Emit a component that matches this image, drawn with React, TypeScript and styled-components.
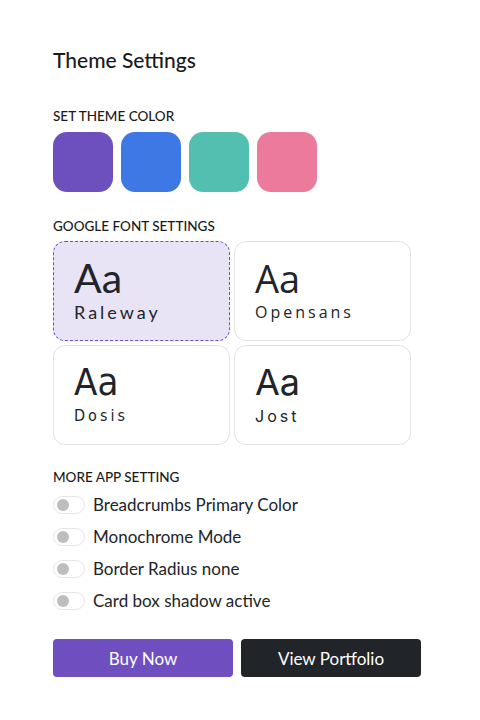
import React from "react";
import styled, { createGlobalStyle } from "styled-components";

const Global = createGlobalStyle`
  html, body { margin: 0; padding: 0; background: #fff; }
  body { font-family: "Lato", "Noto Sans", sans-serif; color: #212529; }
`;

const Panel = styled.div`
  width: 480px;
  box-sizing: border-box;
  padding: 48px 53px 40px 53px;
`;

const Title = styled.h2`
  margin: 0 0 36px 0;
  font-size: 21px;
  font-weight: 500;
  line-height: 24px;
  color: #1a1a1a;
`;

const SectionLabel = styled.h6<{ $gap?: number }>`
  margin: 0 0 ${(p) => p.$gap ?? 8}px 0;
  font-size: 13.5px;
  font-weight: 500;
  line-height: 16px;
  text-transform: uppercase;
  color: #1a1a1a;
`;

const Swatches = styled.div`
  display: flex;
  gap: 8px;
  margin-bottom: 26px;
`;

const Swatch = styled.div<{ $color: string }>`
  width: 60px;
  height: 60px;
  border-radius: 14px;
  background: ${(p) => p.$color};
`;

const FontGrid = styled.div`
  display: grid;
  grid-template-columns: 177px 177px;
  grid-auto-rows: 100px;
  gap: 4px;
  margin-bottom: 24px;
`;

const FontCard = styled.div<{ $active?: boolean }>`
  box-sizing: border-box;
  border-radius: 12px;
  border: 1px ${(p) => (p.$active ? "dashed #6f4fbf" : "solid #e3e3e3")};
  background: ${(p) => (p.$active ? "#e8e3f5" : "#fff")};
  padding: 14px 20px 0 20px;
  display: flex;
  flex-direction: column;
`;

const Sample = styled.div<{ $font: string; $size: number }>`
  font-family: ${(p) => p.$font};
  font-size: ${(p) => p.$size}px;
  font-weight: 400;
  line-height: 44px;
  color: #212529;
`;

const FontName = styled.div<{ $font: string; $size: number }>`
  font-family: ${(p) => p.$font};
  font-size: ${(p) => p.$size}px;
  font-weight: 400;
  letter-spacing: 3px;
  line-height: 24px;
  color: #212529;
`;

const SettingList = styled.div`
  display: flex;
  flex-direction: column;
  gap: 14px;
  margin-bottom: 29px;
`;

const SettingRow = styled.label`
  display: flex;
  align-items: center;
  gap: 8px;
  font-size: 17px;
  line-height: 18px;
  color: #212529;
`;

const Toggle = styled.span`
  box-sizing: border-box;
  width: 32px;
  height: 18px;
  border-radius: 9px;
  border: 1px solid #e6e6e6;
  display: flex;
  align-items: center;
  padding-left: 3px;
  &::before {
    content: "";
    width: 12px;
    height: 12px;
    border-radius: 50%;
    background: #bdbdbd;
  }
`;

const Buttons = styled.div`
  display: flex;
  gap: 8px;
`;

const Button = styled.button<{ $dark?: boolean }>`
  width: 180px;
  height: 38px;
  border: none;
  border-radius: 4px;
  background: ${(p) => (p.$dark ? "#212529" : "#6f4fbf")};
  color: #fff;
  font-family: "Lato", "Noto Sans", sans-serif;
  font-size: 17px;
`;

const fonts = [
  { name: "Raleway", font: `"Lato", sans-serif`, size: 41, nsize: 18, active: true },
  { name: "Opensans", font: `"Open Sans", sans-serif`, size: 38, nsize: 16 },
  { name: "Dosis", font: `"DejaVu Sans Condensed", sans-serif`, size: 38, nsize: 16 },
  { name: "Jost", font: `"Inter", sans-serif`, size: 36, nsize: 16 },
];

const settings = [
  "Breadcrumbs Primary Color",
  "Monochrome Mode",
  "Border Radius none",
  "Card box shadow active",
];

export default function App() {
  return (
    <>
      <Global />
      <Panel>
        <Title>Theme Settings</Title>
        <SectionLabel>Set Theme Color</SectionLabel>
        <Swatches>
          {["#6d4fbd", "#3e78e4", "#53bfb1", "#ec7a9c"].map((c) => (
            <Swatch key={c} $color={c} />
          ))}
        </Swatches>
        <SectionLabel $gap={7}>Google Font Settings</SectionLabel>
        <FontGrid>
          {fonts.map((f) => (
            <FontCard key={f.name} $active={f.active}>
              <Sample $font={f.font} $size={f.size}>Aa</Sample>
              <FontName $font={f.font} $size={f.nsize}>{f.name}</FontName>
            </FontCard>
          ))}
        </FontGrid>
        <SectionLabel $gap={11}>More App Setting</SectionLabel>
        <SettingList>
          {settings.map((s) => (
            <SettingRow key={s}>
              <Toggle />
              {s}
            </SettingRow>
          ))}
        </SettingList>
        <Buttons>
          <Button>Buy Now</Button>
          <Button $dark>View Portfolio</Button>
        </Buttons>
      </Panel>
    </>
  );
}
